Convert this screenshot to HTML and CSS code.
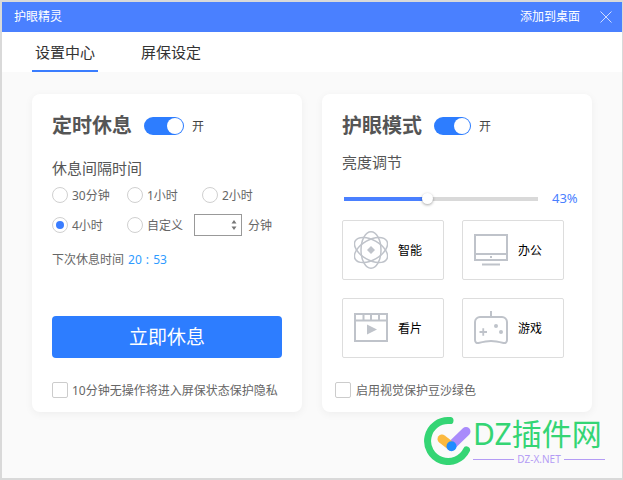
FILE: index.html
```html
<!DOCTYPE html>
<html lang="zh-CN">

<head>
  <meta charset="UTF-8" />
  <title>护眼精灵</title>
  <link rel="stylesheet" href="styles.css">
</head>

<body>

  <div class="window">
    <header class="titlebar">
      <span class="app-name">护眼精灵</span>
      <span class="add-desktop">添加到桌面</span>
      <svg class="close" width="12" height="12" viewBox="0 0 12 12">
        <path d="M.5.5l11 11M11.500.5l-11 11" stroke="#cfdcff" fill="none" />
      </svg>
    </header>

    <nav class="tabs">
      <span class="tab active">设置中心</span>
      <span class="tab">屏保设定</span>
    </nav>

    <main class="content">
      <!-- 定时休息 -->
      <section class="card">
        <div class="card-head">
          <h2>定时休息</h2>
          <span class="switch"></span>
          <span class="switch-text">开</span>
        </div>
        <div class="label label-interval">休息间隔时间</div>
        <div class="radio-row">
          <span class="radio-item"><i class="radio"></i>30分钟</span>
          <span class="radio-item"><i class="radio"></i>1小时</span>
          <span class="radio-item"><i class="radio"></i>2小时</span>
        </div>
        <div class="radio-row radio-row-custom">
          <span class="radio-item"><i class="radio checked"></i>4小时</span>
          <span class="radio-item radio-short"><i class="radio"></i>自定义</span>
          <span class="spin">
            <svg width="6" height="10" viewBox="0 0 6 10">
              <path d="M3 0l2.500 3.500h-5zM3 10l2.500-3.500h-5z" fill="#777" />
            </svg>
          </span>
          <span class="unit">分钟</span>
        </div>
        <div class="next-time">下次休息时间<span class="time">20 : 53</span></div>
        <button class="rest-btn">立即休息</button>
        <div class="check-row"><i class="checkbox"></i>10分钟无操作将进入屏保状态保护隐私</div>
      </section>

      <!-- 护眼模式 -->
      <section class="card">
        <div class="card-head">
          <h2>护眼模式</h2>
          <span class="switch switch-small"></span>
          <span class="switch-text">开</span>
        </div>
        <div class="label label-bright">亮度调节</div>
        <div class="slider-row">
          <div class="slider">
            <div class="slider-fill" style="width: 43%"></div>
            <span class="slider-knob"></span>
          </div>
          <span class="percent">43%</span>
        </div>
        <div class="modes">
          <div class="mode">
            <svg width="34" height="38" viewBox="0 0 34 38" fill="none" stroke="#bfc3ca" stroke-width="1.500">
              <ellipse cx="17" cy="19" rx="10" ry="18.200" />
              <ellipse cx="17" cy="19" rx="10" ry="18.200" transform="rotate(60 17 19)" />
              <ellipse cx="17" cy="19" rx="10" ry="18.200" transform="rotate(-60 17 19)" />
              <path d="M17 15l4 4-4 4-4-4z" fill="#bfc3ca" stroke="none" />
            </svg>
            <span>智能</span>
          </div>
          <div class="mode">
            <svg width="34" height="38" viewBox="0 0 34 38" fill="none" stroke="#bfc3ca" stroke-width="2">
              <rect x="1" y="4" width="32" height="25" />
              <path d="M1 23h32M8 33.500h18" />
              <path d="M16 25h2v2h-2z" fill="#bfc3ca" stroke="none" />
            </svg>
            <span>办公</span>
          </div>
          <div class="mode">
            <svg width="34" height="38" viewBox="0 0 34 38" fill="none" stroke="#bfc3ca" stroke-width="2">
              <rect x="1" y="5" width="32" height="27" />
              <path d="M1 11.500h32M9.500 5v6.500M17 5v6.500M25 5v6.500" />
              <path d="M13 15.500l10 5-10 5z" fill="#bfc3ca" stroke="none" />
            </svg>
            <span>看片</span>
          </div>
          <div class="mode">
            <svg width="34" height="38" viewBox="0 0 34 38" fill="none" stroke="#bfc3ca" stroke-width="2">
              <path d="M17 2v6M6 8h22c2.500 0 5 2 5 5v18c0 2-1.500 3.500-3.500 3-4-1-8-2-12.500-2s-8.500 1-12.500 2C2.500 34.500 1 33 1 31V13c0-3 2.500-5 5-5z" />
              <path d="M5.500 23h7.500M9.250 19.250v7.500" stroke-width="1.800" />
              <circle cx="22" cy="17" r="2" fill="#bfc3ca" stroke="none" />
              <circle cx="27" cy="23" r="2" fill="#bfc3ca" stroke="none" />
            </svg>
            <span>游戏</span>
          </div>
        </div>
        <div class="check-row check-row-out"><i class="checkbox"></i>启用视觉保护豆沙绿色</div>
      </section>
    </main>

    <!-- 水印 -->
    <div class="watermark">
      <svg width="52" height="52" viewBox="0 0 52 52" fill="none" stroke-linecap="round">
        <path d="M30 7.600A20.500 20.500 0 1 0 46.500 37" stroke="#34d574" stroke-width="7" />
        <path d="M31 33L46 18.500" stroke="#a98bfb" stroke-width="9" />
        <path d="M22 26l9 7" stroke="#fbb93f" stroke-width="9" />
        <circle cx="31.500" cy="33.300" r="5" fill="#1f8bff" />
      </svg>
      <div class="wm-text">
        <div class="wm-name">DZ插件网</div>
        <div class="wm-url">DZ-X.NET</div>
      </div>
    </div>
  </div>

</body>

</html>
```

FILE: styles.css
```css
body {
  margin: 0;
  background: #d9d9d9;
  font-family: "Noto Sans", "Noto Sans CJK SC", sans-serif;
  color: #555;
  overflow: hidden;
}

.window {
  position: relative;
  width: 620px;
  height: 476px;
  margin: 2px 1px 0 2px;
  background: #fafafa;
  box-shadow: 0 1px 0 #888, 0 2px 0 #aaa;
}

.titlebar {
  height: 30px;
  background: #4a80ff;
  color: #fff;
  font-size: 12px;
  line-height: 30px;
  display: flex;
  align-items: center;
  padding: 0 10px 0 12px;
}

.app-name {
  flex: 1;
}

.close {
  margin-left: 20px;
}

.tabs {
  height: 40px;
  background: #fff;
  display: flex;
  padding-left: 30px;
  gap: 40px;
}

.tab {
  width: 66px;
  font-size: 15px;
  line-height: 40px;
  color: #333;
  text-align: center;
  height: 38px;
}

.tab.active {
  border-bottom: 2px solid #3a7dff;
}

.content {
  display: flex;
  gap: 20px;
  padding: 22px 30px;
}

.card {
  width: 230px;
  height: 318px;
  padding: 0 20px;
  background: #fff;
  border-radius: 8px;
  box-shadow: 0 2px 8px rgba(0, 0, 0, 0.05);
}

.card-head {
  display: flex;
  align-items: center;
  height: 28px;
  padding-top: 18px;
}

h2 {
  margin: 0;
  font-size: 20px;
  line-height: 28px;
  font-weight: bold;
  color: #555;
}

.switch {
  position: relative;
  width: 40px;
  height: 18px;
  margin-left: 12px;
  border-radius: 9px;
  background: #2d7dff;
}

.switch::after {
  content: "";
  position: absolute;
  right: 1px;
  top: 1px;
  width: 16px;
  height: 16px;
  border-radius: 50%;
  background: #fff;
}

.switch-small {
  width: 37px;
}

.switch-text {
  margin-left: 8px;
  font-size: 12px;
  color: #444;
}

.label {
  font-size: 15px;
  line-height: 20px;
  color: #555;
}

.label-interval {
  margin-top: 18px;
}

.label-bright {
  margin-top: 12px;
}

.radio-row {
  display: flex;
  align-items: center;
  height: 22px;
  margin-top: 6px;
  font-size: 12px;
  color: #666;
}

.radio-row-custom {
  margin-top: 8px;
}

.radio-item {
  display: flex;
  align-items: center;
  width: 75px;
}

.radio-short {
  width: 67px;
}

.radio {
  width: 14px;
  height: 14px;
  margin-right: 4px;
  border: 1px solid #d0d0d0;
  border-radius: 50%;
  background: #fff;
  position: relative;
}

.radio.checked::after {
  content: "";
  position: absolute;
  left: 3px;
  top: 3px;
  width: 8px;
  height: 8px;
  border-radius: 50%;
  background: #3a7dff;
}

.spin {
  width: 46px;
  height: 20px;
  border: 1px solid #999;
  display: flex;
  align-items: center;
  justify-content: flex-end;
}

.spin svg {
  margin-right: 4px;
}

.unit {
  margin-left: 6px;
}

.next-time {
  margin-top: 15px;
  font-size: 12px;
  line-height: 18px;
  color: #666;
}

.time {
  margin-left: 4px;
  color: #2f9bff;
  word-spacing: 1px;
}

.rest-btn {
  display: block;
  width: 230px;
  height: 42px;
  margin-top: 47px;
  padding: 0 0 2px;
  border: none;
  border-radius: 4px;
  background: #2d7dff;
  color: #fff;
  font-family: inherit;
  font-size: 19px;
}

.check-row {
  display: flex;
  align-items: center;
  height: 16px;
  margin-top: 24px;
  font-size: 12px;
  color: #666;
}

.check-row-out {
  margin-left: -7px;
}

.checkbox {
  width: 14px;
  height: 14px;
  margin-right: 4px;
  border: 1px solid #ccc;
  border-radius: 2px;
  background: #fff;
}

.check-row-out .checkbox {
  margin-right: 5px;
}

.slider-row {
  display: flex;
  align-items: center;
  width: 250px;
  height: 20px;
  margin-top: 17px;
}

.slider {
  position: relative;
  flex: none;
  width: 194px;
  height: 4px;
  margin-left: 2px;
  background: #d9d9d9;
}

.slider-fill {
  height: 100%;
  background: #4a80ff;
}

.slider-knob {
  position: absolute;
  left: 78px;
  top: -4px;
  width: 11px;
  height: 11px;
  border-radius: 50%;
  background: #fff;
  box-shadow: 0 1px 3px rgba(0, 0, 0, 0.35);
}

.percent {
  margin: 0 0 3px 14px;
  font-size: 13px;
  color: #4a80ff;
}

.modes {
  display: grid;
  grid-template-columns: 102px 102px;
  grid-auto-rows: 60px;
  gap: 18px;
  margin-top: 11px;
}

.mode {
  display: flex;
  align-items: center;
  gap: 10px;
  padding-left: 11px;
  border: 1px solid #ddd;
  border-radius: 2px;
  font-size: 12px;
  color: #000;
  box-sizing: border-box;
}

.watermark {
  position: absolute;
  left: 418px;
  top: 409px;
  display: flex;
  padding-top: 2px;
}

.wm-text {
  margin-left: 1px;
  width: 132px;
}

.wm-name {
  font-size: 30px;
  line-height: 34px;
  margin-top: 4px;
  color: #34d574;
  white-space: nowrap;
}

.wm-url {
  display: flex;
  align-items: center;
  gap: 3px;
  margin-top: 2px;
  font-size: 10px;
  line-height: 12px;
  color: #b49cf5;
}

.wm-url::before,
.wm-url::after {
  content: "";
  flex: 1;
  height: 1px;
  background: #b49cf5;
}
```
